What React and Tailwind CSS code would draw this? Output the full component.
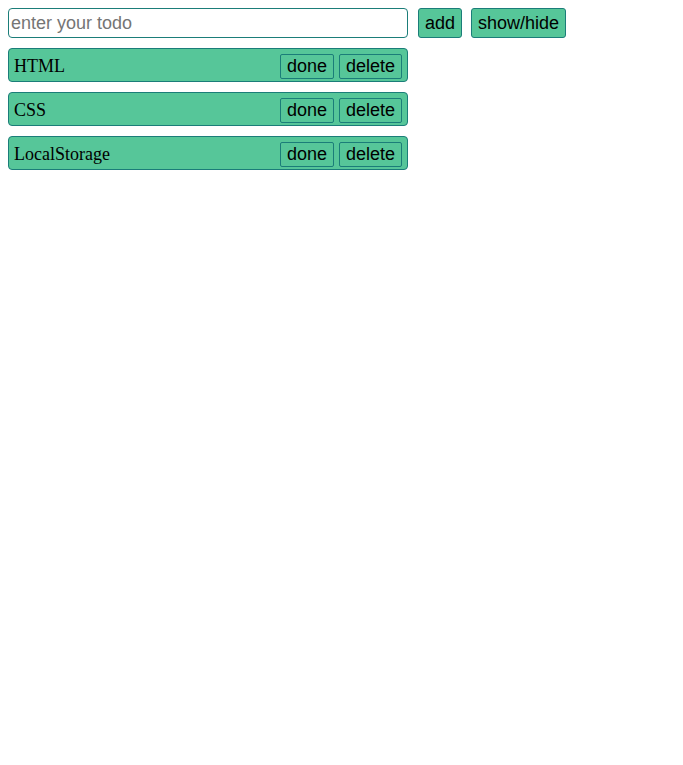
import React from "react";

const todos = ["HTML", "CSS", "LocalStorage"];

const btn =
  "h-[25px] rounded-[2px] border border-[#1b7d79] bg-[#56c699] px-[6px] pb-[1px] text-[18px] leading-none text-black font-['Liberation_Sans',Arial,sans-serif]";

export default function App() {
  return (
    <div className="min-h-[765px] bg-white p-[8px]">
      <div className="flex items-center">
        <input
          className="w-[400px] h-[30px] rounded-[4px] border border-[#1b7d79] px-[2px] text-[18px] text-black placeholder:text-[#757575] outline-none font-['Liberation_Sans',Arial,sans-serif]"
          placeholder="enter your todo"
        />
        <button className="ml-[10px] h-[30px] rounded-[3px] border border-[#1b7d79] bg-[#56c699] px-[6px] text-[18px] text-black font-['Liberation_Sans',Arial,sans-serif]">
          add
        </button>
        <button className="ml-[9px] h-[30px] rounded-[3px] border border-[#1b7d79] bg-[#56c699] px-[6px] text-[18px] text-black font-['Liberation_Sans',Arial,sans-serif]">
          show/hide
        </button>
      </div>
      <div className="mt-[10px] flex flex-col gap-[10px]">
        {todos.map((t) => (
          <div
            key={t}
            className="flex h-[34px] w-[400px] items-center justify-between rounded-[4px] border border-[#1b7d79] bg-[#56c699] pl-[5px] pr-[5px] pt-[3px]"
          >
            <span className="text-[18px] text-black font-['Liberation_Serif','Times_New_Roman',serif]">
              {t}
            </span>
            <div className="flex gap-[5px]">
              <button className={btn}>done</button>
              <button className={btn}>delete</button>
            </div>
          </div>
        ))}
      </div>
    </div>
  );
}
